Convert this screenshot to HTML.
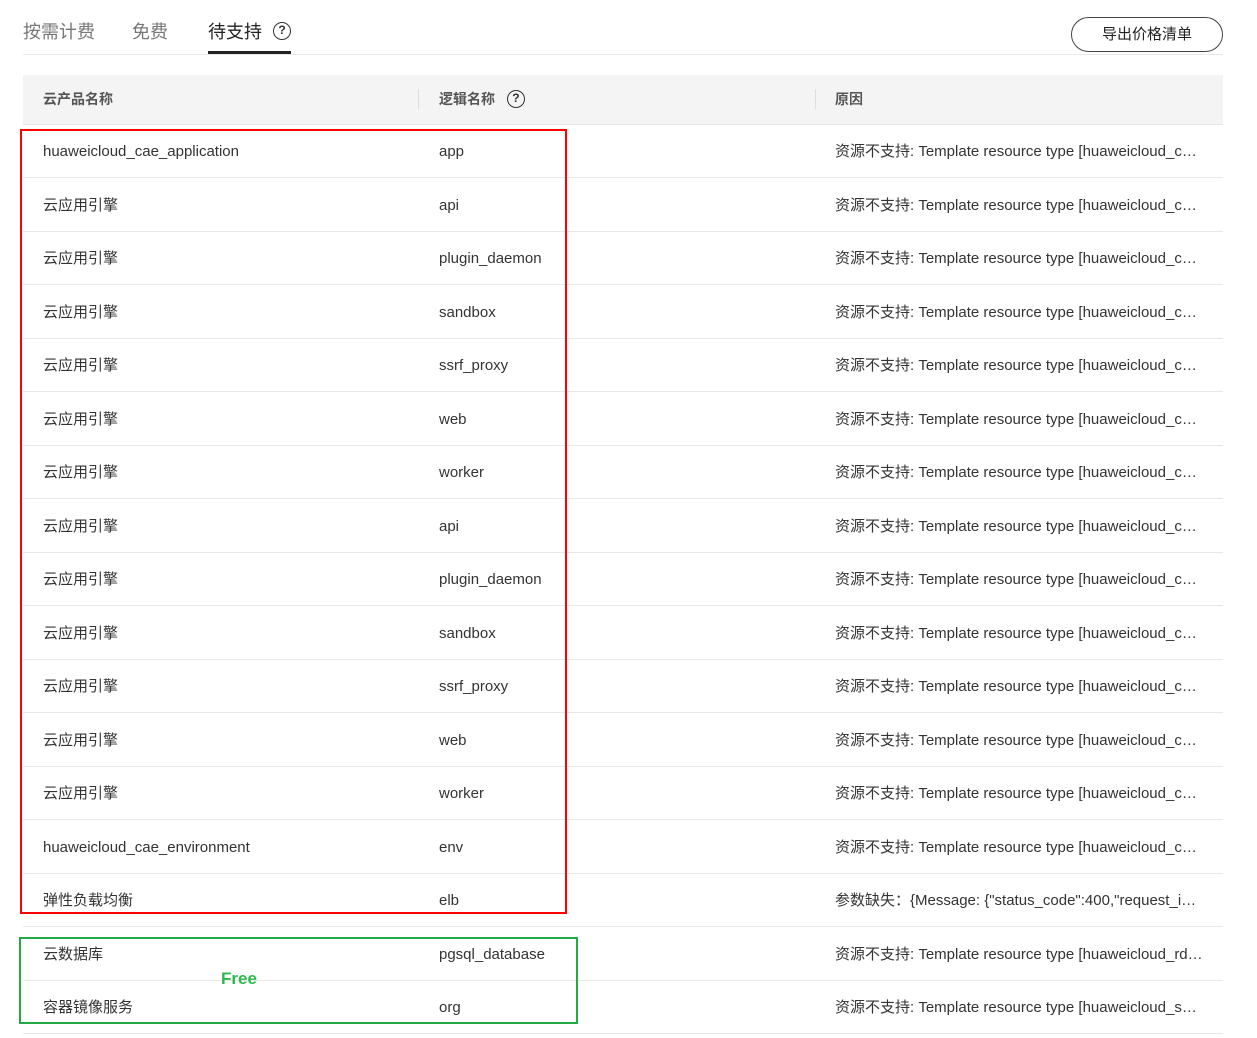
<!DOCTYPE html>
<html><head><meta charset="utf-8"><style>
*{margin:0;padding:0;box-sizing:border-box}
body{width:1257px;height:1038px;background:#fff;font-family:"Liberation Sans","Noto Sans CJK SC",sans-serif;color:#252b3a;position:relative;overflow:hidden}
.tab{position:absolute;top:20px;font-size:18px;color:#777;line-height:24px}
.tabline{position:absolute;left:23px;top:54px;width:1200px;height:1px;background:#e8e8e8}
.btn{position:absolute;left:1071px;top:17px;width:152px;height:35px;border:1px solid #444;border-radius:18px;font-size:15px;text-align:center;line-height:33px;color:#222}
.head{position:absolute;left:23px;top:75px;width:1200px;height:50px;background:#f4f4f4;border-bottom:1px solid #e6e6e6;font-size:14px;font-weight:bold;color:#555}
.head>span{position:absolute;top:14px;line-height:20px}
.sep{position:absolute;top:14px;width:1px;height:20px;background:#ddd}
.row{position:absolute;left:23px;width:1200px;height:54px;border-bottom:1px solid #e8e8e8;font-size:15px;color:#333}
.row span{position:absolute;top:18px;line-height:20px;height:20px;display:block;white-space:nowrap}
.c1{left:20px}.c2{left:416px}.c3{left:812px}
.q{display:inline-block;width:18px;height:18px;border:1.5px solid #333;border-radius:50%;text-align:center;font-size:12px;line-height:15px;font-weight:bold;color:#333;vertical-align:middle}
</style></head><body>
<div class="tab" style="left:23px">按需计费</div>
<div class="tab" style="left:132px">免费</div>
<div class="tab" style="left:208px;color:#222">待支持 <span class="q" style="margin-left:6px;position:relative;top:-2px">?</span></div>
<div class="tabline"></div>
<div style="position:absolute;left:208px;top:51px;width:83px;height:3px;background:#222"></div>
<div class="btn">导出价格清单</div>
<div class="head"><span style="left:20px">云产品名称</span><div class="sep" style="left:395px"></div><span style="left:416px">逻辑名称 <span class="q" style="position:relative;top:-1px;margin-left:8px;font-weight:bold">?</span></span><div class="sep" style="left:792px"></div><span style="left:812px">原因</span></div>
<div class="row" style="top:124px"><span class="c1">huaweicloud_cae_application</span><span class="c2">app</span><span class="c3">资源不支持: Template resource type [huaweicloud_c…</span></div>
<div class="row" style="top:178px"><span class="c1">云应用引擎</span><span class="c2">api</span><span class="c3">资源不支持: Template resource type [huaweicloud_c…</span></div>
<div class="row" style="top:231px"><span class="c1">云应用引擎</span><span class="c2">plugin_daemon</span><span class="c3">资源不支持: Template resource type [huaweicloud_c…</span></div>
<div class="row" style="top:285px"><span class="c1">云应用引擎</span><span class="c2">sandbox</span><span class="c3">资源不支持: Template resource type [huaweicloud_c…</span></div>
<div class="row" style="top:338px"><span class="c1">云应用引擎</span><span class="c2">ssrf_proxy</span><span class="c3">资源不支持: Template resource type [huaweicloud_c…</span></div>
<div class="row" style="top:392px"><span class="c1">云应用引擎</span><span class="c2">web</span><span class="c3">资源不支持: Template resource type [huaweicloud_c…</span></div>
<div class="row" style="top:445px"><span class="c1">云应用引擎</span><span class="c2">worker</span><span class="c3">资源不支持: Template resource type [huaweicloud_c…</span></div>
<div class="row" style="top:499px"><span class="c1">云应用引擎</span><span class="c2">api</span><span class="c3">资源不支持: Template resource type [huaweicloud_c…</span></div>
<div class="row" style="top:552px"><span class="c1">云应用引擎</span><span class="c2">plugin_daemon</span><span class="c3">资源不支持: Template resource type [huaweicloud_c…</span></div>
<div class="row" style="top:606px"><span class="c1">云应用引擎</span><span class="c2">sandbox</span><span class="c3">资源不支持: Template resource type [huaweicloud_c…</span></div>
<div class="row" style="top:659px"><span class="c1">云应用引擎</span><span class="c2">ssrf_proxy</span><span class="c3">资源不支持: Template resource type [huaweicloud_c…</span></div>
<div class="row" style="top:713px"><span class="c1">云应用引擎</span><span class="c2">web</span><span class="c3">资源不支持: Template resource type [huaweicloud_c…</span></div>
<div class="row" style="top:766px"><span class="c1">云应用引擎</span><span class="c2">worker</span><span class="c3">资源不支持: Template resource type [huaweicloud_c…</span></div>
<div class="row" style="top:820px"><span class="c1">huaweicloud_cae_environment</span><span class="c2">env</span><span class="c3">资源不支持: Template resource type [huaweicloud_c…</span></div>
<div class="row" style="top:873px"><span class="c1">弹性负载均衡</span><span class="c2">elb</span><span class="c3">参数缺失：{Message: {"status_code":400,"request_i…</span></div>
<div class="row" style="top:927px"><span class="c1">云数据库</span><span class="c2">pgsql_database</span><span class="c3">资源不支持: Template resource type [huaweicloud_rd…</span></div>
<div class="row" style="top:980px"><span class="c1">容器镜像服务</span><span class="c2">org</span><span class="c3">资源不支持: Template resource type [huaweicloud_s…</span></div>
<div style="position:absolute;left:20px;top:129px;width:547px;height:785px;border:2px solid #f00"></div>
<div style="position:absolute;left:19px;top:937px;width:559px;height:87px;border:2px solid #22aa44"></div>
<div style="position:absolute;left:221px;top:969px;font-size:17px;font-weight:bold;color:#2db84d">Free</div>
</body></html>
